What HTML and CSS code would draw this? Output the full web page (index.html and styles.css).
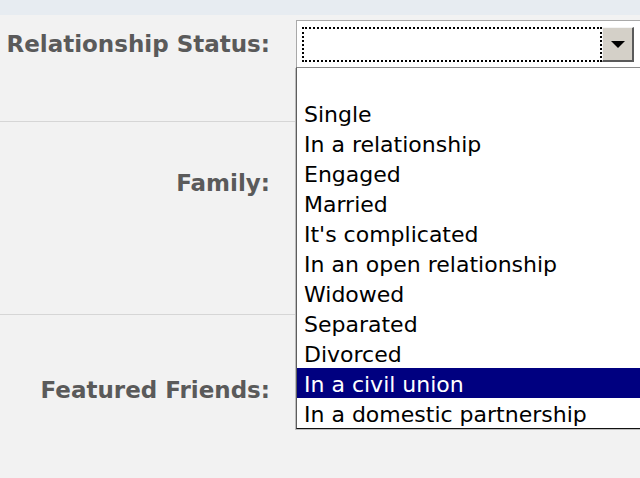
FILE: index.html
```html
<!DOCTYPE html>
<html>
<head>
<meta charset="utf-8">
<link rel="stylesheet" href="styles.css">
</head>
<body>
<div class="topbar"></div>
<div class="form">
  <div class="row row-status">
    <div class="label">Relationship Status:</div>
    <div class="control">
      <div class="select">
        <div class="focus"></div>
        <div class="btn"><span class="arrow"></span></div>
      </div>
    </div>
  </div>
  <div class="row row-family">
    <div class="label">Family:</div>
  </div>
  <div class="row row-friends">
    <div class="label">Featured Friends:</div>
  </div>
</div>
<ul class="dropdown">
  <li class="opt">&nbsp;</li>
  <li class="opt">Single</li>
  <li class="opt">In a relationship</li>
  <li class="opt">Engaged</li>
  <li class="opt">Married</li>
  <li class="opt">It's complicated</li>
  <li class="opt">In an open relationship</li>
  <li class="opt">Widowed</li>
  <li class="opt">Separated</li>
  <li class="opt">Divorced</li>
  <li class="opt selected">In a civil union</li>
  <li class="opt">In a domestic partnership</li>
</ul>
</body>
</html>
```
FILE: styles.css
```css
html, body {
  margin: 0;
  padding: 0;
}
body {
  background: #f2f2f2;
  width: 640px;
  height: 478px;
  overflow: hidden;
  position: relative;
  font-family: "DejaVu Sans", "Liberation Sans", sans-serif;
}
.topbar {
  height: 15px;
  background: #e7ecf1;
}
.form {
  display: flex;
  flex-direction: column;
}
.row {
  display: grid;
  grid-template-columns: 270px 344px;
  column-gap: 26px;
  border-bottom: 1px solid #d6d6d6;
  box-sizing: border-box;
}
.row-status {
  height: 107px;
  padding-top: 5px;
  align-items: start;
}
.row-family {
  height: 193px;
  padding-top: 46px;
}
.row-friends {
  border-bottom: none;
  padding-top: 60px;
}
.label {
  text-align: right;
  font-weight: bold;
  font-size: 23px;
  line-height: 30px;
  color: #5a5a5a;
}
.row-status .label {
  line-height: 48px;
  height: 48px;
}
.select {
  box-sizing: border-box;
  height: 48px;
  width: 344px;
  background: #fff;
  border-top: 1px solid #a9a9a9;
  border-left: 1px solid #a9a9a9;
  padding: 6px 6px 6px 5px;
  display: flex;
}
.focus {
  flex: 1;
  border: 2px dotted #000;
  border-right: 2px dotted #000;
  box-sizing: border-box;
}
.btn {
  width: 32px;
  box-sizing: border-box;
  background: #d4d0c8;
  border-top: 1px solid #f4f4f4;
  border-left: 1px solid #f4f4f4;
  border-right: 2px solid #5a5a5a;
  border-bottom: 2px solid #5a5a5a;
  display: flex;
  align-items: center;
  justify-content: center;
}
.arrow {
  width: 0;
  height: 0;
  border-left: 7px solid transparent;
  border-right: 7px solid transparent;
  border-top: 7px solid #000;
}
.dropdown {
  position: absolute;
  left: 296px;
  top: 67px;
  width: 360px;
  margin: 0;
  padding: 0;
  list-style: none;
  background: #fff;
  border-top: 1px solid #8a8a8a;
  border-left: 1px solid #5e5e5e;
  border-bottom: 1px solid #111;
  box-shadow: -1px 1px 0 #bdbdbd;
}
.opt {
  height: 27px;
  padding-top: 3px;
  line-height: 27px;
  padding-left: 7px;
  font-size: 22px;
  color: #000;
  white-space: nowrap;
}
.opt.selected {
  background: #000080;
  color: #fff;
}
```
